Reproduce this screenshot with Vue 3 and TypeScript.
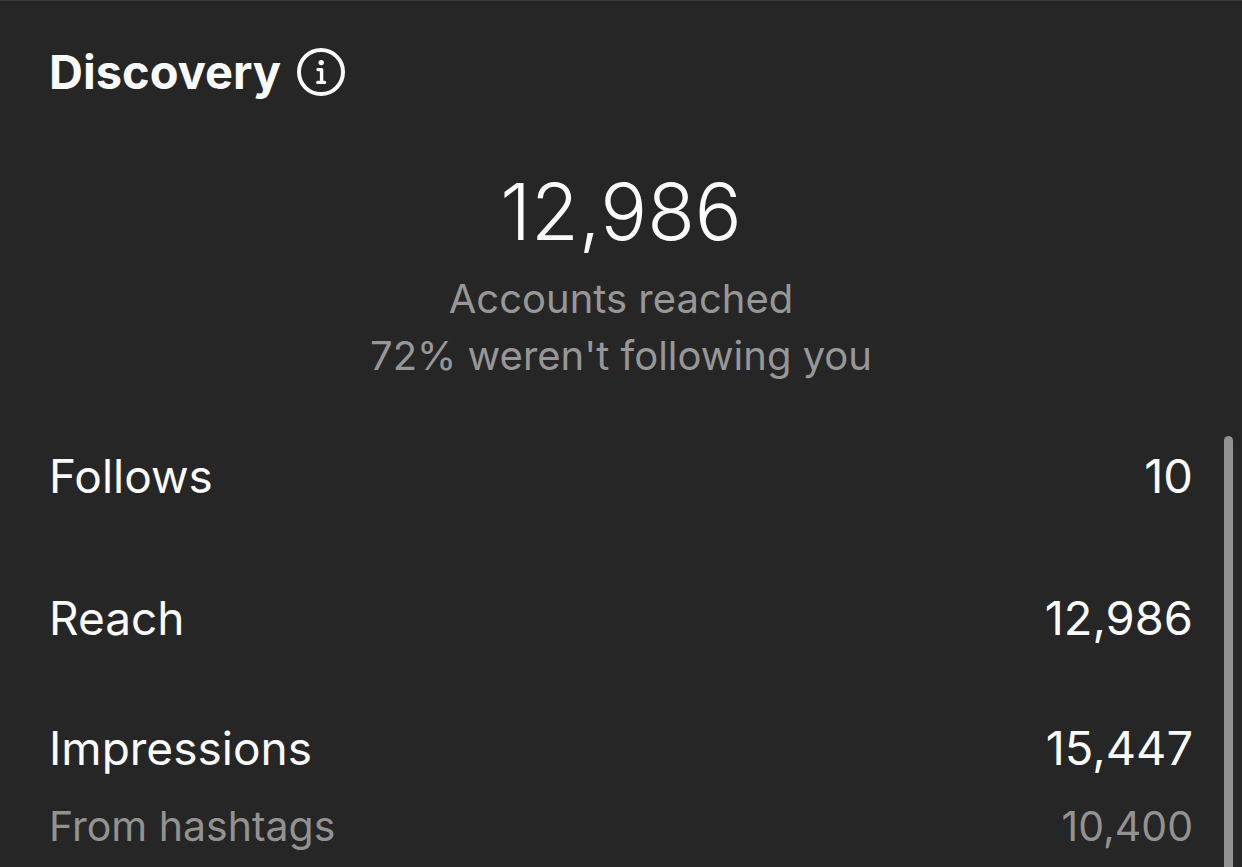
<script setup lang="ts">
interface Metric {
  label: string
  value: string
  detail?: { label: string; value: string }
}

const metrics: Metric[] = [
  { label: 'Follows', value: '10' },
  { label: 'Reach', value: '12,986' },
  {
    label: 'Impressions',
    value: '15,447',
    detail: { label: 'From hashtags', value: '10,400' },
  },
]
</script>

<template>
  <main class="panel">
    <header class="heading">
      <h1>Discovery</h1>
      <button type="button" class="info" aria-label="About discovery">
        <svg viewBox="0 0 48 48" fill="none" stroke="currentColor" aria-hidden="true">
          <circle cx="24" cy="24" r="22" stroke-width="4" />
          <circle cx="24.2" cy="14.6" r="2.7" fill="currentColor" stroke="none" />
          <path
            d="M21 21.6h3.6v12.6M20.8 34.4h6.8"
            stroke-width="3.4"
            stroke-linecap="round"
            stroke-linejoin="round"
          />
        </svg>
      </button>
    </header>

    <section class="summary">
      <p class="total">12,986</p>
      <p class="caption">Accounts reached</p>
      <p class="caption">72% weren't following you</p>
    </section>

    <section class="metrics">
      <dl v-for="metric in metrics" :key="metric.label" class="metric">
        <div class="row">
          <dt>{{ metric.label }}</dt>
          <dd>{{ metric.value }}</dd>
        </div>
        <div v-if="metric.detail" class="row detail">
          <dt>{{ metric.detail.label }}</dt>
          <dd>{{ metric.detail.value }}</dd>
        </div>
      </dl>
    </section>

    <div class="scroll-thumb" aria-hidden="true"></div>
  </main>
</template>

<style>
body {
  margin: 0;
  background: #262626;
}
</style>

<style scoped>
.panel {
  position: relative;
  box-sizing: border-box;
  min-height: 100vh;
  padding: 41px 49px 12px;
  border-top: 1px solid #383838;
  background: #262626;
  color: #fafafa;
  font-family: Inter, "Liberation Sans", sans-serif;
}

h1,
p,
dl,
dd {
  margin: 0;
}

.heading {
  display: flex;
  align-items: center;
  gap: 16px;
}

h1 {
  font-size: 47px;
  font-weight: 700;
  line-height: 60px;
}

.info {
  width: 48px;
  height: 48px;
  padding: 0;
  border: 0;
  background: none;
  color: inherit;
}

.info svg {
  display: block;
  width: 100%;
  height: 100%;
}

.summary {
  margin-top: 62px;
  text-align: center;
}

.total {
  font-size: 78px;
  font-weight: 300;
  line-height: 96px;
  margin-bottom: 10px;
}

.caption {
  font-size: 40px;
  line-height: 57px;
  color: #979797;
}

.metrics {
  display: flex;
  flex-direction: column;
  gap: 70px;
  margin-top: 62px;
}

.metric:first-child {
  padding-bottom: 12px;
}

.row {
  display: flex;
  justify-content: space-between;
  gap: 24px;
  line-height: 60px;
}

.row dt {
  font-size: 46px;
}

.row dd {
  font-size: 47px;
}

.detail {
  margin-top: 20px;
  line-height: 57px;
  color: #929292;
}

.detail dt,
.detail dd {
  font-size: 41px;
}

.scroll-thumb {
  position: absolute;
  top: 435px;
  right: 9px;
  bottom: 0;
  width: 9px;
  border-radius: 5px 5px 0 0;
  background: #929292;
}
</style>
